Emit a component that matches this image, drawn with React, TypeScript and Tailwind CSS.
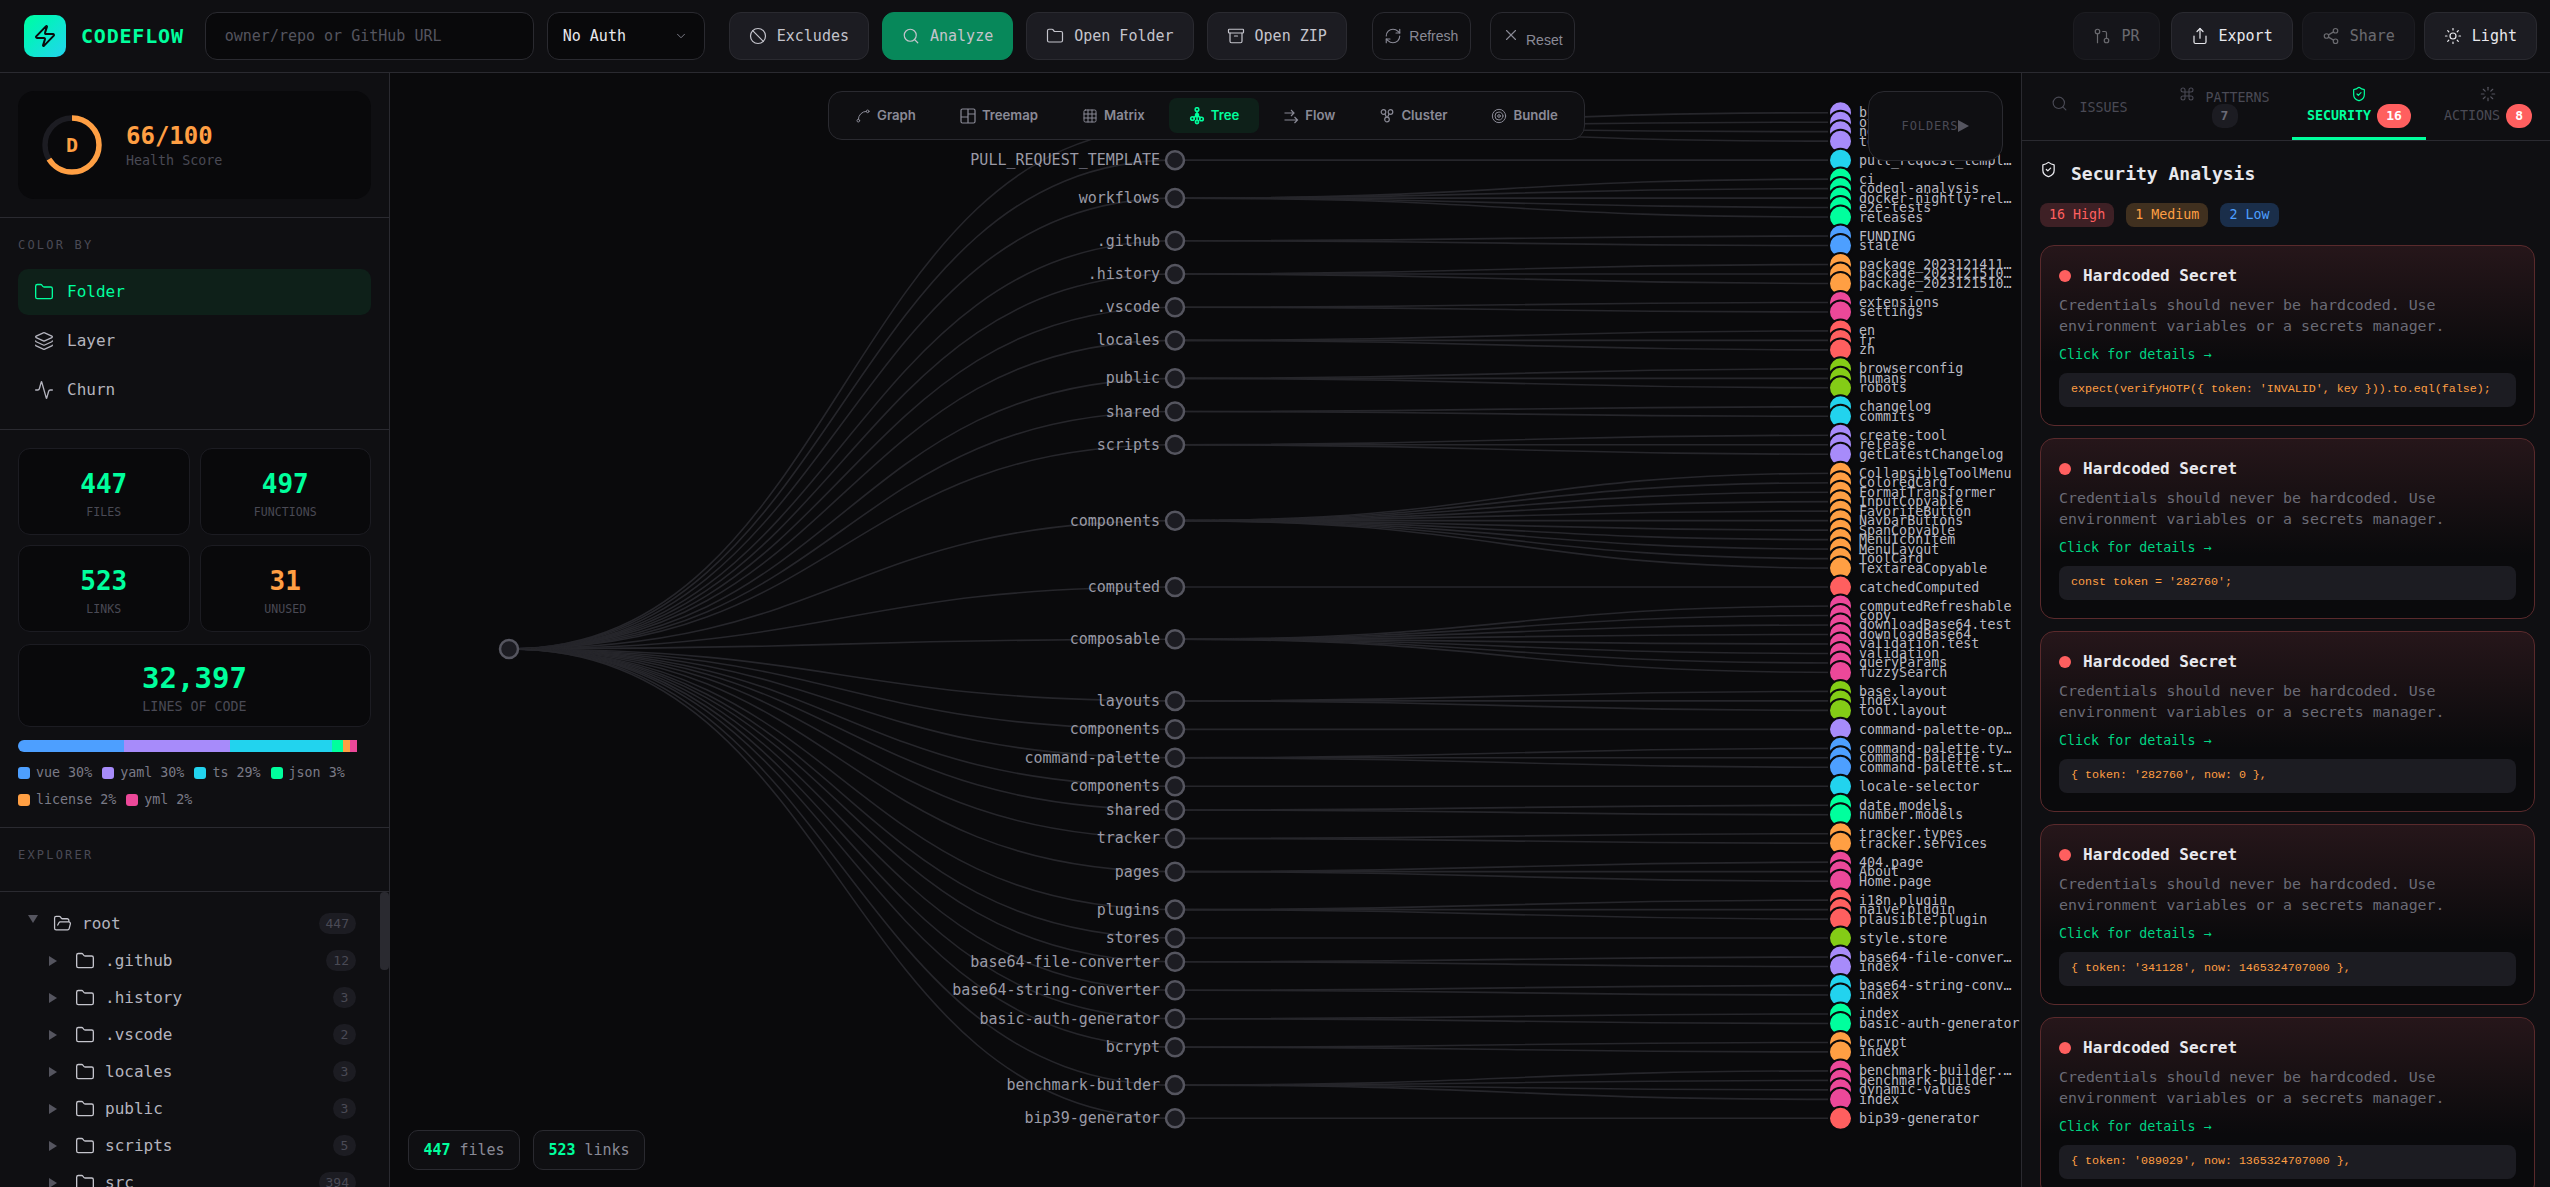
import {
  Activity,
  Archive,
  Ban,
  ChevronDown,
  Command,
  Folder,
  FolderOpen,
  GitPullRequest,
  Grid3x3,
  Layers,
  Loader,
  RefreshCw,
  Search,
  Share,
  Share2,
  ShieldCheck,
  Spline,
  Sun,
  Target,
  X,
  Zap,
} from "lucide-react";

const mono = "font-['DejaVu_Sans_Mono','Liberation_Mono',monospace]";

const PURPLE = "#a78bfa";
const CYAN = "#22d3ee";
const GREEN = "#00ff9d";
const BLUE = "#4d9fff";
const ORANGE = "#ff9f43";
const PINK = "#ec4899";
const RED = "#ff5f5f";
const LIME = "#84cc16";

type Group = { name: string; color: string; leaves: string[] };

const groups: Group[] = [
  { name: "ISSUE_TEMPLATE", color: PURPLE, leaves: ["bug-report", "other", "new-tool", "tool-request"] },
  { name: "PULL_REQUEST_TEMPLATE", color: CYAN, leaves: ["pull_request_templ…"] },
  { name: "workflows", color: GREEN, leaves: ["ci", "codeql-analysis", "docker-nightly-rel…", "e2e-tests", "releases"] },
  { name: ".github", color: BLUE, leaves: ["FUNDING", "stale"] },
  { name: ".history", color: ORANGE, leaves: ["package_2023121411…", "package_2023121510…", "package_2023121510…"] },
  { name: ".vscode", color: PINK, leaves: ["extensions", "settings"] },
  { name: "locales", color: RED, leaves: ["en", "fr", "zh"] },
  { name: "public", color: LIME, leaves: ["browserconfig", "humans", "robots"] },
  { name: "shared", color: CYAN, leaves: ["changelog", "commits"] },
  { name: "scripts", color: PURPLE, leaves: ["create-tool", "release", "getLatestChangelog"] },
  {
    name: "components",
    color: ORANGE,
    leaves: [
      "CollapsibleToolMenu",
      "ColoredCard",
      "FormatTransformer",
      "InputCopyable",
      "FavoriteButton",
      "NavbarButtons",
      "SpanCopyable",
      "MenuIconItem",
      "MenuLayout",
      "ToolCard",
      "TextareaCopyable",
    ],
  },
  { name: "computed", color: RED, leaves: ["catchedComputed"] },
  {
    name: "composable",
    color: PINK,
    leaves: [
      "computedRefreshable",
      "copy",
      "downloadBase64.test",
      "downloadBase64",
      "validation.test",
      "validation",
      "queryParams",
      "fuzzySearch",
    ],
  },
  { name: "layouts", color: LIME, leaves: ["base.layout", "index", "tool.layout"] },
  { name: "components", color: PURPLE, leaves: ["command-palette-op…"] },
  { name: "command-palette", color: BLUE, leaves: ["command-palette.ty…", "command-palette", "command-palette.st…"] },
  { name: "components", color: CYAN, leaves: ["locale-selector"] },
  { name: "shared", color: GREEN, leaves: ["date.models", "number.models"] },
  { name: "tracker", color: ORANGE, leaves: ["tracker.types", "tracker.services"] },
  { name: "pages", color: PINK, leaves: ["404.page", "About", "Home.page"] },
  { name: "plugins", color: RED, leaves: ["i18n.plugin", "naive.plugin", "plausible.plugin"] },
  { name: "stores", color: LIME, leaves: ["style.store"] },
  { name: "base64-file-converter", color: PURPLE, leaves: ["base64-file-conver…", "index"] },
  { name: "base64-string-converter", color: CYAN, leaves: ["base64-string-conv…", "index"] },
  { name: "basic-auth-generator", color: GREEN, leaves: ["index", "basic-auth-generator"] },
  { name: "bcrypt", color: ORANGE, leaves: ["bcrypt", "index"] },
  { name: "benchmark-builder", color: PINK, leaves: ["benchmark-builder.…", "benchmark-builder", "dynamic-values", "index"] },
  { name: "bip39-generator", color: RED, leaves: ["bip39-generator"] },
];

// tree coordinates are relative to the canvas pane (which starts at x=390, y=73)
const ROOT = { x: 119, y: 576 };
const NODE_X = 785;
const LEAF_X = 1450.5;
const LABEL_X = 1469;
const FIRST_Y = 39.7;
const UNIT = 9.487;

function link(x0: number, y0: number, x1: number, y1: number) {
  const mid = (x0 + x1) / 2;
  return `M${x0},${y0} C${mid},${y0} ${mid},${y1} ${x1},${y1}`;
}

const layout = (() => {
  let unit = 0;
  return groups.map((g) => {
    const ys = g.leaves.map((_, i) => FIRST_Y + (unit + i) * UNIT);
    unit += g.leaves.length + 1;
    return { ...g, ys, y: (ys[0] + ys[ys.length - 1]) / 2 };
  });
})();

function TreeCanvas() {
  return (
    <svg width="1630" height="1114" className={`absolute inset-0 ${mono}`}>
      <g fill="none" stroke="#26262b" strokeWidth="1.6">
        {layout.map((g, i) => (
          <path key={i} d={link(ROOT.x, ROOT.y, NODE_X, g.y)} />
        ))}
        {layout.map((g, i) =>
          g.ys.map((y, j) => <path key={`${i}-${j}`} d={link(NODE_X, g.y, LEAF_X, y)} />),
        )}
      </g>
      <circle cx={ROOT.x} cy={ROOT.y} r="9" fill="#1c1c22" stroke="#55555f" strokeWidth="2.5" />
      {layout.map((g, i) => (
        <g key={i}>
          <circle cx={NODE_X} cy={g.y} r="9" fill="#1c1c22" stroke="#55555f" strokeWidth="2.5" />
          <text x={NODE_X - 15} y={g.y} textAnchor="end" dominantBaseline="central" fontSize="15" fill="#9a9aa6">
            {g.name}
          </text>
        </g>
      ))}
      {layout.map((g, i) =>
        g.ys.map((y, j) => (
          <g key={`${i}-${j}`}>
            <circle cx={LEAF_X} cy={y} r="11.5" fill={g.color} stroke="#0a0a0c" strokeWidth="2" />
          </g>
        )),
      )}
      {layout.map((g, i) =>
        g.ys.map((y, j) => (
          <text key={`${i}-${j}`} x={LABEL_X} y={y} dominantBaseline="central" fontSize="13.33" fill="#b8b8c2">
            {g.leaves[j]}
          </text>
        )),
      )}
    </svg>
  );
}

function TreemapIcon() {
  return (
    <svg width="16" height="16" viewBox="0 0 16 16" fill="none" stroke="currentColor" strokeWidth="1.2">
      <rect x="1" y="1" width="14" height="14" rx="1.5" />
      <path d="M8 1v14M1 9h7M8 6h7" />
    </svg>
  );
}

function TreeIcon() {
  return (
    <svg width="16" height="18" viewBox="0 0 16 18" fill="none" stroke="currentColor" strokeWidth="1.6">
      <circle cx="8" cy="2.5" r="1.8" />
      <path d="M8 4.5v4M8 8.5 4 11M8 8.5l4 2.5M8 8.5V14" />
      <circle cx="8" cy="8" r="1.5" fill="currentColor" />
      <circle cx="3.5" cy="11.5" r="1.8" />
      <circle cx="12.5" cy="12" r="1.8" />
      <circle cx="8" cy="15" r="1.6" />
    </svg>
  );
}

function FlowIcon() {
  return (
    <svg width="16" height="16" viewBox="0 0 16 16" fill="none" stroke="currentColor" strokeWidth="1.2">
      <path d="M1.5 5h9M8 2l3 3-3 3M1.5 12h13M11.5 9l3 3-3 3" />
    </svg>
  );
}

function ClusterIcon() {
  return (
    <svg width="16" height="16" viewBox="0 0 16 16" fill="none" stroke="currentColor" strokeWidth="1.2">
      <circle cx="4.5" cy="4" r="2.3" />
      <circle cx="11.5" cy="4" r="2.3" />
      <circle cx="8" cy="11.5" r="2.3" />
      <path d="M6 6l1.4 3.2M10 6 8.6 9.2" />
    </svg>
  );
}

const views = [
  { label: "Graph", icon: <Spline size={16} strokeWidth={1.5} /> },
  { label: "Treemap", icon: <TreemapIcon /> },
  { label: "Matrix", icon: <Grid3x3 size={16} strokeWidth={1.5} /> },
  { label: "Tree", icon: <TreeIcon />, active: true },
  { label: "Flow", icon: <FlowIcon /> },
  { label: "Cluster", icon: <ClusterIcon /> },
  { label: "Bundle", icon: <Target size={16} strokeWidth={1.5} /> },
];

function HeaderButton({ icon, label, className = "" }: { icon: React.ReactNode; label: string; className?: string }) {
  return (
    <button
      className={`flex h-12 items-center gap-[10px] rounded-[12px] border border-[#2a2a30] bg-[#1c1c22] px-[19px] text-[15px] text-[#c4c4cc] ${className}`}
    >
      {icon}
      <span>{label}</span>
    </button>
  );
}

function StatCard({ value, label, orange }: { value: string; label: string; orange?: boolean }) {
  return (
    <div className="flex h-[87px] flex-col items-center justify-center rounded-[12px] border border-[#1c1c22] bg-[#09090b] pt-[3px]">
      <div className={`text-[26px] leading-[34px] font-bold ${orange ? "text-[#ff9f43]" : "text-[#00ff9d]"}`}>{value}</div>
      <div className="mt-[3px] text-[11.5px] leading-4 tracking-[0.1px] text-[#4a4a55]">{label}</div>
    </div>
  );
}

const legend = [
  { color: BLUE, label: "vue 30%" },
  { color: PURPLE, label: "yaml 30%" },
  { color: CYAN, label: "ts 29%" },
  { color: GREEN, label: "json 3%" },
  { color: ORANGE, label: "license 2%" },
  { color: PINK, label: "yml 2%" },
];

const explorer = [
  { name: ".github", count: 12 },
  { name: ".history", count: 3 },
  { name: ".vscode", count: 2 },
  { name: "locales", count: 3 },
  { name: "public", count: 3 },
  { name: "scripts", count: 5 },
  { name: "src", count: 394 },
];

function Badge({ children }: { children: React.ReactNode }) {
  return (
    <span className="ml-auto flex h-[21px] min-w-[23px] items-center justify-center rounded-full bg-[#1c1c22] px-[7px] text-[13px] text-[#4a4a55]">
      {children}
    </span>
  );
}

function Triangle({ down }: { down?: boolean }) {
  return (
    <svg width="10" height="10" viewBox="0 0 10 10" fill="#55555f">
      {down ? <path d="M0 1h10L5 9z" /> : <path d="M1 0l8 5-8 5z" />}
    </svg>
  );
}

function Sidebar() {
  return (
    <aside className="flex w-[390px] shrink-0 flex-col border-r border-[#2a2a30] bg-[#0f0f12]">
      {/* health */}
      <div className="border-b border-[#2a2a30] p-[18px]">
        <div className="flex h-[108px] items-center gap-[24px] rounded-[16px] bg-[#09090b] pl-6">
          <div className="relative h-[60px] w-[60px]">
            <svg width="60" height="60" viewBox="0 0 60 60" className="-rotate-90">
              <circle cx="30" cy="30" r="27" fill="none" stroke="#1c1c22" strokeWidth="5.5" />
              <circle
                cx="30"
                cy="30"
                r="27"
                fill="none"
                stroke="#ff9f43"
                strokeWidth="5.5"
                strokeDasharray={`${2 * Math.PI * 27 * 0.66} ${2 * Math.PI * 27}`}
              />
            </svg>
            <span className="absolute inset-0 flex items-center justify-center text-[20px] font-bold text-[#ff9f43]">D</span>
          </div>
          <div>
            <div className="text-[24px] leading-[32px] font-bold text-[#ff9f43]">66/100</div>
            <div className="text-[13.33px] leading-[18px] text-[#4a4a55]">Health Score</div>
          </div>
        </div>
      </div>

      {/* color by */}
      <div className="border-b border-[#2a2a30] px-[18px] pt-[19px] pb-[16px]">
        <div className="mb-4 text-[12px] leading-4 tracking-[2.2px] text-[#4a4a55]">COLOR BY</div>
        <div className="flex flex-col gap-[3px]">
          <div className="flex h-[46px] items-center gap-[13px] rounded-[10px] bg-[#0e2019] pl-4 text-[16px] text-[#00ff9d]">
            <Folder size={20} strokeWidth={1.6} />
            Folder
          </div>
          <div className="flex h-[46px] items-center gap-[13px] pl-4 text-[16px] text-[#b4b4be]">
            <Layers size={20} strokeWidth={1.6} />
            Layer
          </div>
          <div className="flex h-[46px] items-center gap-[13px] pl-4 text-[16px] text-[#b4b4be]">
            <Activity size={20} strokeWidth={1.6} />
            Churn
          </div>
        </div>
      </div>

      {/* stats */}
      <div className="border-b border-[#2a2a30] px-[18px] pt-[18px] pb-[18px]">
        <div className="grid grid-cols-2 gap-[10px]">
          <StatCard value="447" label="FILES" />
          <StatCard value="497" label="FUNCTIONS" />
          <StatCard value="523" label="LINKS" />
          <StatCard value="31" label="UNUSED" orange />
        </div>
        <div className="mt-[12px] flex h-[83px] flex-col items-center justify-center rounded-[12px] border border-[#1c1c22] bg-[#09090b] pt-[3px]">
          <div className="text-[29px] leading-[38px] font-bold text-[#00ff9d]">32,397</div>
          <div className="mt-[1px] text-[13.33px] leading-[18px] text-[#4a4a55]">LINES OF CODE</div>
        </div>
        <div className="mt-[13px] flex h-3 w-[339px] overflow-hidden rounded-l-full">
          <div className="w-[106px] bg-[#4d9fff]" />
          <div className="w-[106px] bg-[#a78bfa]" />
          <div className="w-[102px] bg-[#22d3ee]" />
          <div className="w-[11px] bg-[#00ff9d]" />
          <div className="w-[7px] bg-[#ff9f43]" />
          <div className="w-[7px] bg-[#ec4899]" />
        </div>
        <div className="mt-[12px] flex flex-wrap gap-x-[10px] gap-y-[9px] text-[13.33px] leading-[18px] text-[#7a7a86]">
          {legend.map((l) => (
            <span key={l.label} className="flex items-center gap-[6px]">
              <span className="h-3 w-3 rounded-[3px]" style={{ backgroundColor: l.color }} />
              {l.label}
            </span>
          ))}
        </div>
      </div>

      {/* explorer */}
      <div className="h-[64px] shrink-0 border-b border-[#2a2a30] px-[18px] pt-[19px]">
        <div className="text-[12px] leading-4 tracking-[2.2px] text-[#4a4a55]">EXPLORER</div>
      </div>
      <div className="relative min-h-0 flex-1 overflow-hidden pt-[13px] pr-[33px] text-[15px] text-[#b4b4be]">
        <div className="absolute top-0 right-0 h-[78px] w-[9px] rounded-[4px] bg-[#2a2a30]" />
        <div className="flex h-[37px] items-center pl-7">
          <span className="-translate-y-[5px]">
            <Triangle down />
          </span>
          <FolderOpen size={19} strokeWidth={1.6} className="ml-[15px] text-[#c4c4cc]" />
          <span className="ml-[10px] text-[16px]">root</span>
          <Badge>447</Badge>
        </div>
        {explorer.map((row) => (
          <div key={row.name} className="flex h-[37px] items-center pl-[48px]">
            <Triangle />
            <Folder size={20} strokeWidth={1.6} className="ml-[17px] text-[#c4c4cc]" />
            <span className="ml-[10px] text-[16px]">{row.name}</span>
            <Badge>{row.count}</Badge>
          </div>
        ))}
      </div>
    </aside>
  );
}

const findings = [
  "expect(verifyHOTP({ token: 'INVALID', key })).to.eql(false);",
  "const token = '282760';",
  "{ token: '282760', now: 0 },",
  "{ token: '341128', now: 1465324707000 },",
  "{ token: '089029', now: 1365324707000 },",
];

function SecretCard({ code }: { code: string }) {
  return (
    <div className="shrink-0 rounded-[14px] border border-[#5a2a2c] bg-linear-to-b from-[#26161a] to-[#0a0a0c] to-65% px-[18px] pt-[18px] pb-[18px]">
      <div className="flex h-6 items-center gap-3">
        <span className="h-3 w-3 rounded-full bg-[#ff5f5f]" />
        <span className="text-[16px] font-bold text-[#e8e8ed]">Hardcoded Secret</span>
      </div>
      <p className="mt-[7px] text-[14.9px] leading-[21px] text-[#6b6b76]">
        Credentials should never be hardcoded. Use environment variables or a secrets manager.
      </p>
      <div className="mt-[9px] text-[13.33px] leading-[18px] font-medium text-[#00d483]">Click for details →</div>
      <div className="mt-[9px] flex h-[34px] items-center rounded-[8px] bg-[#1c1c22] px-3 font-['Liberation_Mono',monospace] text-[11.67px] whitespace-pre text-[#ff9f43]">
        {code}
      </div>
    </div>
  );
}

function RightPanel() {
  return (
    <section className="flex w-[529px] shrink-0 flex-col overflow-hidden border-l border-[#2a2a30] bg-[#0f0f12]">
      <div className="flex h-[68px] shrink-0 border-b border-[#2a2a30] text-[13.33px] text-[#4a4a55]">
        <div className="flex w-[135px] items-center justify-center gap-[11px] pt-[2px]">
          <Search size={17} strokeWidth={1.6} className="-translate-y-[4px]" />
          <span>ISSUES</span>
        </div>
        <div className="flex w-[135px] flex-col items-center pt-[16px]">
          <div className="flex items-center gap-[10px]">
            <Command size={16} strokeWidth={1.6} className="-translate-y-[4px]" />
            <span className="leading-[18px]">PATTERNS</span>
          </div>
          <span className="-mt-[3px] flex h-6 w-[26px] items-center justify-center rounded-[10px] bg-[#1c1c22] text-[13px] font-bold text-[#6b6b76]">
            7
          </span>
        </div>
        <div className="relative flex w-[134px] flex-col items-center pt-[13px]">
          <ShieldCheck size={16} strokeWidth={1.8} className="text-[#00ff9d]" />
          <div className="mt-[2px] flex items-center gap-[6px]">
            <span className="font-bold text-[#00ff9d]">SECURITY</span>
            <span className="flex h-6 w-[34px] items-center justify-center rounded-full bg-[#ff5f5f] text-[13px] font-bold text-white">
              16
            </span>
          </div>
          <div className="absolute right-0 bottom-0 left-0 h-[3px] bg-[#00ff9d]" />
        </div>
        <div className="flex w-[124px] flex-col items-center pt-[13px]">
          <Loader size={16} strokeWidth={1.8} className="text-[#55555f]" />
          <div className="mt-[2px] flex items-center gap-[6px]">
            <span>ACTIONS</span>
            <span className="flex h-6 w-[26px] items-center justify-center rounded-full bg-[#ff5f5f] text-[13px] font-bold text-white">
              8
            </span>
          </div>
        </div>
      </div>
      <div className="px-[18px] pr-[15px]">
        <div className="mt-[20px] flex h-6 items-center gap-[14px] text-[18px] font-bold text-[#e8e8ed]">
          <ShieldCheck size={17} strokeWidth={1.8} className="-translate-y-[4px]" />
          Security Analysis
        </div>
        <div className="mt-[18px] flex gap-3 text-[13.33px] font-medium">
          <span className="flex h-6 items-center rounded-[8px] bg-[#3e2025] px-[9px] text-[#ff5f5f]">16 High</span>
          <span className="flex h-6 items-center rounded-[8px] bg-[#40301f] px-[9px] text-[#ff9f43]">1 Medium</span>
          <span className="flex h-6 items-center rounded-[8px] bg-[#1a2e4a] px-[9px] text-[#4d9fff]">2 Low</span>
        </div>
        <div className="mt-[18px] flex flex-col gap-3">
          {findings.map((code, i) => (
            <SecretCard key={i} code={code} />
          ))}
        </div>
      </div>
    </section>
  );
}

export default function App() {
  return (
    <div className={`flex h-screen w-full flex-col overflow-hidden bg-[#0a0a0c] ${mono}`}>
      <header className="flex h-[73px] shrink-0 items-center border-b border-[#2a2a30] bg-[#0f0f12] pr-[13px] pl-6">
        <div className="flex h-[42px] w-[42px] items-center justify-center rounded-[10px] bg-linear-to-br from-[#00ff9d] to-[#22d3ee]">
          <Zap size={24} strokeWidth={2} className="text-[#0a0a0c]" />
        </div>
        <div className="ml-[15px] text-[20px] font-bold tracking-[0.8px] text-[#00ff9d]">CODEFLOW</div>
        <div className="ml-[21px] flex h-12 w-[329px] items-center rounded-[12px] border border-[#2a2a30] bg-[#09090b] pl-[19px] text-[15px] text-[#55555f]">
          owner/repo or GitHub URL
        </div>
        <div className="ml-[13px] flex h-12 w-[158px] items-center justify-between rounded-[12px] border border-[#2a2a30] bg-[#09090b] pr-[16px] pl-[15px] text-[15px] font-medium text-[#e8e8ed]">
          No Auth
          <ChevronDown size={14} strokeWidth={1.5} className="text-[#8a8a96]" />
        </div>
        <HeaderButton className="ml-6" icon={<Ban size={18} strokeWidth={1.6} />} label="Excludes" />
        <HeaderButton
          className="ml-[13px] border-[#07885a] bg-[#07885a] text-[#0b4a33]"
          icon={<Search size={18} strokeWidth={1.6} />}
          label="Analyze"
        />
        <HeaderButton className="ml-[13px]" icon={<Folder size={18} strokeWidth={1.6} />} label="Open Folder" />
        <HeaderButton className="ml-[13px]" icon={<Archive size={18} strokeWidth={1.6} />} label="Open ZIP" />
        <button className="ml-[25px] flex h-12 w-[99px] items-center justify-center gap-[7px] rounded-[12px] border border-[#2a2a30] font-['Liberation_Sans',sans-serif] text-[14px] text-[#8a8a96]">
          <RefreshCw size={18} strokeWidth={1.5} />
          Refresh
        </button>
        <button className="ml-[19px] flex h-12 w-[85px] items-center justify-center gap-[6px] rounded-[12px] border border-[#2a2a30] font-['Liberation_Sans',sans-serif] text-[14px] text-[#8a8a96]">
          <X size={18} strokeWidth={1.5} className="-translate-y-[1px]" />
          <span className="translate-y-[4px]">Reset</span>
        </button>
        <div className="ml-auto flex items-center">
          <HeaderButton className="px-[16px] opacity-50" icon={<GitPullRequest size={18} strokeWidth={1.6} />} label="PR" />
          <HeaderButton className="ml-[11px] text-[#e8e8ed]" icon={<Share size={18} strokeWidth={1.6} />} label="Export" />
          <HeaderButton className="ml-[9px] opacity-50" icon={<Share2 size={18} strokeWidth={1.6} />} label="Share" />
          <HeaderButton className="ml-[9px] text-[#e8e8ed]" icon={<Sun size={18} strokeWidth={1.6} />} label="Light" />
        </div>
      </header>

      <div className="flex min-h-0 flex-1">
        <Sidebar />
        <main className="relative min-w-0 flex-1 overflow-hidden">
          <TreeCanvas />

          {/* view switcher */}
          <div className="absolute top-[18px] left-[438px] flex h-[49px] gap-1 rounded-[14px] border border-[#2a2a30] bg-[#0f0f12] p-[6px] font-['Inter',sans-serif] text-[13.2px] font-semibold text-[#8a8a96]">
            {views.map((v) => (
              <div
                key={v.label}
                className={`flex items-center gap-[6px] rounded-[8px] px-5 ${v.active ? "bg-[#0e2019] text-[#00ff9d]" : ""}`}
              >
                {v.icon}
                {v.label}
              </div>
            ))}
          </div>

          {/* folders legend (collapsed) */}
          <div className="absolute top-[18px] right-[18px] flex h-[70px] w-[135px] items-center justify-center rounded-[16px] border border-[#2a2a30] bg-[#0f0f12] text-[12px] tracking-[0.9px] text-[#4a4a55]">
            FOLDERS
            <svg width="11" height="12" viewBox="0 0 11 12" fill="#55555f">
              <path d="M0 0l11 6-11 6z" />
            </svg>
          </div>

          <div className="absolute bottom-[17px] left-[18px] flex gap-[13px] text-[15px] text-[#8a8a96]">
            <div className="flex h-10 w-[112px] items-center justify-center gap-[9px] rounded-[10px] border border-[#2a2a30] bg-[#0f0f12]">
              <span className="font-bold text-[#00ff9d]">447</span> files
            </div>
            <div className="flex h-10 w-[112px] items-center justify-center gap-[9px] rounded-[10px] border border-[#2a2a30] bg-[#0f0f12]">
              <span className="font-bold text-[#00ff9d]">523</span> links
            </div>
          </div>
        </main>
        <RightPanel />
      </div>
    </div>
  );
}
